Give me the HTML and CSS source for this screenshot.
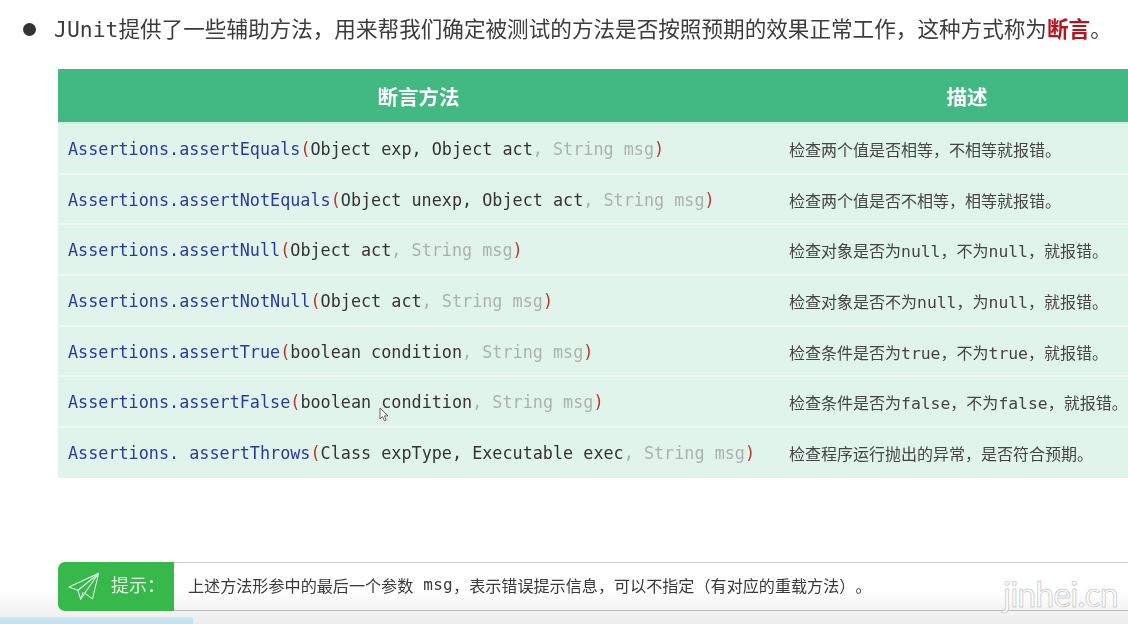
FILE: index.html
```html
<!DOCTYPE html>
<html lang="zh">
<head>
<meta charset="utf-8">
<title>JUnit 断言</title>
<link rel="stylesheet" href="styles.css">
</head>
<body>
<main class="slide">
  <p class="lead"><span class="bullet"></span><span class="lead-text"><span class="latin">JUnit</span>提供了一些辅助方法，用来帮我们确定被测试的方法是否按照预期的效果正常工作，这种方式称为<strong>断言</strong>。</span></p>
  <div class="table-wrap">
    <table>
      <thead>
        <tr><th class="col-method">断言方法</th><th class="col-desc">描述</th></tr>
      </thead>
      <tbody>
        <tr><td class="code"><span class="fn">Assertions.assertEquals</span><span class="paren">(</span>Object exp, Object act<span class="opt">, String msg</span><span class="paren">)</span></td><td class="desc">检查两个值是否相等，不相等就报错。</td></tr>
        <tr><td class="code"><span class="fn">Assertions.assertNotEquals</span><span class="paren">(</span>Object unexp, Object act<span class="opt">, String msg</span><span class="paren">)</span></td><td class="desc">检查两个值是否不相等，相等就报错。</td></tr>
        <tr><td class="code"><span class="fn">Assertions.assertNull</span><span class="paren">(</span>Object act<span class="opt">, String msg</span><span class="paren">)</span></td><td class="desc">检查对象是否为<span class="latin">null</span>，不为<span class="latin">null</span>，就报错。</td></tr>
        <tr><td class="code"><span class="fn">Assertions.assertNotNull</span><span class="paren">(</span>Object act<span class="opt">, String msg</span><span class="paren">)</span></td><td class="desc">检查对象是否不为<span class="latin">null</span>，为<span class="latin">null</span>，就报错。</td></tr>
        <tr><td class="code"><span class="fn">Assertions.assertTrue</span><span class="paren">(</span>boolean condition<span class="opt">, String msg</span><span class="paren">)</span></td><td class="desc">检查条件是否为<span class="latin">true</span>，不为<span class="latin">true</span>，就报错。</td></tr>
        <tr><td class="code"><span class="fn">Assertions.assertFalse</span><span class="paren">(</span>boolean condition<span class="opt">, String msg</span><span class="paren">)</span></td><td class="desc">检查条件是否为<span class="latin">false</span>，不为<span class="latin">false</span>，就报错。</td></tr>
        <tr><td class="code"><span class="fn">Assertions. assertThrows</span><span class="paren">(</span>Class expType, Executable exec<span class="opt">, String msg</span><span class="paren">)</span></td><td class="desc">检查程序运行抛出的异常，是否符合预期。</td></tr>
      </tbody>
    </table>
  </div>
  <aside class="tip">
    <div class="tip-label">
      <svg class="tip-icon" viewBox="0 0 34 30" width="32" height="29" fill="none" stroke="currentColor" stroke-width="1.1" stroke-linejoin="round" aria-hidden="true">
        <path d="M32.5 1 1 15.5l9.5 3.6L32.5 1Z"/>
        <path d="M32.5 1 10.5 19.1l3 9.5 4.2-6.5L32.5 1Z"/>
        <path d="M32.5 1 26 28.2l-8.3-6.1"/>
        <path d="M13.5 28.6 16 21"/>
      </svg>
      <span>提示：</span>
    </div>
    <div class="tip-body">上述方法形参中的最后一个参数<span class="latin"> msg</span>，表示错误提示信息，可以不指定（有对应的重载方法）。</div>
  </aside>
</main>
<div class="shore"></div>
<svg class="cursor" viewBox="0 0 10 15" width="10" height="15" aria-hidden="true"><path d="M1 1v11l2.6-2.4 1.8 4.2 1.8-.8-1.8-4.1H9L1 1Z" fill="#fff" stroke="#555" stroke-width=".9"/></svg>
<div class="watermark">jinhei.cn</div>
</body>
</html>
```

FILE: styles.css
```css
* { box-sizing: border-box; }
html, body { margin: 0; padding: 0; }
body {
  position: relative;
  width: 1128px;
  height: 624px;
  overflow: hidden;
  background: linear-gradient(#fff 0, #fff 590px, #ececec 624px);
  font-family: "Noto Sans CJK SC", "Noto Sans", sans-serif;
  color: #333;
  text-spacing-trim: space-all;
}
.slide {
  display: flex;
  flex-direction: column;
  height: 624px;
  padding: 14px 0 0 0;
  filter: blur(0.35px);
}
.latin { font-family: "DejaVu Sans Mono", "Noto Sans CJK SC", monospace; }
.lead {
  display: flex;
  align-items: center;
  margin: 0 0 0 23px;
  height: 30px;
  font-size: 21.6px;
  line-height: 30px;
  white-space: nowrap;
  color: #3c3c3c;
}
.lead .latin { font-size: 21.4px; }
.bullet {
  width: 13px;
  height: 13px;
  border-radius: 50%;
  background: #333;
  margin-right: 18px;
  flex: none;
}
.lead strong { color: #b3141d; font-weight: 700; }
.table-wrap {
  margin: 25px 0 0 58px;
  width: 1070px;
  overflow: hidden;
  flex: none;
}
table {
  width: 1097px;
  table-layout: fixed;
  border-collapse: collapse;
}
.col-method { width: 721px; }
th {
  height: 54px;
  background: #42b883;
  color: #fff;
  font-size: 20.5px;
  font-weight: 700;
  text-align: center;
  padding: 0;
}
td {
  height: 50.7px;
  background: #e1f4ec;
  border-top: 2px solid #edf8f3;
  padding: 1px 0 0 10px;
  white-space: nowrap;
}
tbody tr:first-child td { border-top-color: #cfeee0; }
.code {
  font-family: "DejaVu Sans Mono", monospace;
  font-size: 16.8px;
  color: #333;
}
.fn { color: #2a3a9c; }
.paren { color: #b8382c; }
.opt { color: #aab2ae; }
.desc { font-size: 16px; color: #444; }
.desc .latin { font-size: 16.4px; }
.tip {
  display: flex;
  margin: 84px 0 0 58px;
  height: 49px;
  width: 1070px;
  flex: none;
}
.tip-label {
  display: flex;
  align-items: center;
  gap: 11px;
  width: 116px;
  padding-left: 10px;
  background: #36b84a;
  color: #e4f7e7;
  font-size: 18px;
  border-radius: 7px 0 0 7px;
  flex: none;
}
.tip-label span { margin-top: -4px; }
.tip-icon { flex: none; }
.tip-body {
  flex: 1;
  display: flex;
  align-items: center;
  padding: 0 0 3px 14px;
  border-top: 1px solid #ccc;
  border-bottom: 1px solid #bbb;
  font-size: 16.1px;
  color: #3a3a3a;
  white-space: pre;
}
.tip-body .latin { font-size: 16px; letter-spacing: 0.3px; }
.shore {
  position: absolute;
  left: 0;
  bottom: 0;
  width: 193px;
  height: 7px;
  background: linear-gradient(#cfe6f0, #bfe0ee);
}
.cursor { position: absolute; left: 379px; top: 407px; }
.watermark {
  position: absolute;
  left: 1003px;
  top: 572px;
  font-family: "Lato", "Liberation Sans", sans-serif;
  font-size: 34px;
  font-weight: 400;
  line-height: 44px;
  letter-spacing: -1px;
  white-space: nowrap;
  color: #fbfbfb;
  -webkit-text-stroke: 0.5px #b0b0b0;
}
```
